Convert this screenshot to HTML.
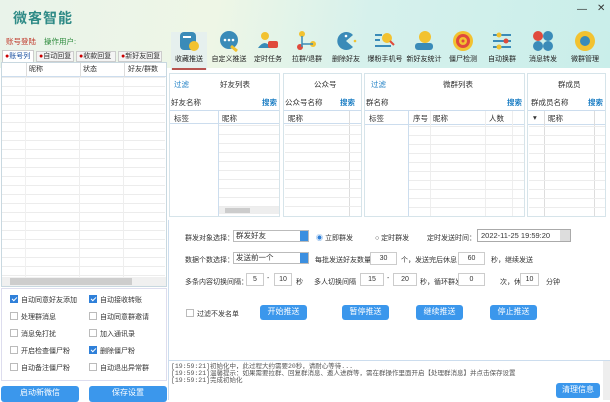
<!DOCTYPE html>
<html><head><meta charset="utf-8"><style>
*{margin:0;padding:0;box-sizing:border-box}
body{width:610px;height:400px;overflow:hidden;position:relative;background:#fff;font-family:"Liberation Sans","Noto Sans CJK SC",sans-serif;font-size:7.5px;color:#333}
.a{position:absolute}
.hdr{left:0;top:0;width:610px;height:68px;background:linear-gradient(100deg,#e9f3ea 0%,#eef6e6 35%,#d6f1ec 60%,#c9eeea 100%)}
.title{left:13px;top:8px;font-size:14px;color:#2e8a86;font-weight:bold;letter-spacing:1px}
.tb{top:30px;width:40px;text-align:center;font-size:7px;color:#222}
.tb svg{display:block;margin:0 auto 2px}
.grid{background-image:linear-gradient(#ececec 1px,transparent 1px);background-size:100% 9px}
.btn{background:#3b97ec;color:#fff;border-radius:3px;text-align:center;font-size:8px}
.cb{width:8px;height:8px;border:1px solid #bbb;background:#fff;display:inline-block;vertical-align:-1px;margin-right:3px}
.cb.on{background:#2f80d9;border-color:#2f80d9;position:relative}
.cb.on:after{content:"";position:absolute;left:2px;top:0;width:2px;height:4px;border:solid #fff;border-width:0 1px 1px 0;transform:rotate(45deg)}
.panel{border:1px solid #d6e4ea;top:73px;height:144px;background:#fff}
.in{border:1px solid #ccc;background:#fff;height:13px;font-size:7px;text-align:center;line-height:11px}
.lbl{font-size:7px;color:#333}
.blue{color:#1e7fc4}
</style></head><body>
<div class="a hdr"></div>
<div class="a title">微客智能</div>
<div class="a" style="left:577px;top:4px;font-size:10px;color:#333">—</div>
<div class="a" style="left:597px;top:3px;font-size:10px;color:#333">✕</div>
<div class="a" style="left:6px;top:36px;font-size:7.5px;color:#c0392b">账号登陆</div>
<div class="a" style="left:44px;top:36px;font-size:7.5px;color:#2a8a3a">操作用户:</div>

<div class="a" style="left:2px;top:50px;width:32px;height:12px;border:1px solid #ccc;border-bottom:none;background:#fff;font-size:7px;color:#1a4fa0;padding-left:2px;line-height:11px"><span style="color:#c00">●</span>账号列</div>
<div class="a" style="left:36px;top:51px;width:38px;height:11px;border:1px solid #ccc;background:#f4f4f4;font-size:7px;padding-left:2px;line-height:10px"><span style="color:#c00">●</span>自动回复</div>
<div class="a" style="left:76px;top:51px;width:40px;height:11px;border:1px solid #ccc;background:#f4f4f4;font-size:7px;padding-left:2px;line-height:10px"><span style="color:#c00">●</span>收款回复</div>
<div class="a" style="left:118px;top:51px;width:44px;height:11px;border:1px solid #ccc;background:#f4f4f4;font-size:7px;padding-left:2px;line-height:10px"><span style="color:#c00">●</span>新好友回复</div>
<div class="a" style="left:1px;top:62px;width:166px;height:225px;border:1px solid #c8d8e0;background:#fff"></div>
<div class="a" style="left:2px;top:63px;width:164px;height:14px;border-bottom:1px solid #cde;font-size:7px;line-height:14px">
<span class="a" style="left:24px;height:14px;border-left:1px solid #ddd"></span><span class="a" style="left:27px">昵称</span>
<span class="a" style="left:78px;height:14px;border-left:1px solid #ddd"></span><span class="a" style="left:81px">状态</span>
<span class="a" style="left:122px;height:14px;border-left:1px solid #ddd"></span><span class="a" style="left:126px">好友/群数</span></div>
<div class="a grid" style="left:2px;top:77px;width:163px;height:200px"></div>
<div class="a" style="left:25px;top:77px;height:200px;border-left:1px solid #f0f0f0"></div>
<div class="a" style="left:79px;top:77px;height:200px;border-left:1px solid #eee"></div>
<div class="a" style="left:123px;top:77px;height:200px;border-left:1px solid #eee"></div>
<div class="a" style="left:2px;top:277px;width:164px;height:9px;background:#f0f0f0"></div>
<div class="a" style="left:10px;top:278px;width:122px;height:7px;background:#cdcdcd"></div>

<div class="a" style="left:1px;top:288px;width:166px;height:93px;border:1px solid #dde;background:#fff"></div>
<div class="a lbl" style="left:10px;top:295px"><span class="cb on"></span>自动同意好友添加</div>
<div class="a lbl" style="left:89px;top:295px"><span class="cb on"></span>自动接收转账</div>
<div class="a lbl" style="left:10px;top:312px"><span class="cb"></span>处理群消息</div>
<div class="a lbl" style="left:89px;top:312px"><span class="cb"></span>自动同意群邀请</div>
<div class="a lbl" style="left:10px;top:329px"><span class="cb"></span>消息免打扰</div>
<div class="a lbl" style="left:89px;top:329px"><span class="cb"></span>加入通讯录</div>
<div class="a lbl" style="left:10px;top:346px"><span class="cb"></span>开启检查僵尸粉</div>
<div class="a lbl" style="left:89px;top:346px"><span class="cb on"></span>删除僵尸粉</div>
<div class="a lbl" style="left:10px;top:363px"><span class="cb"></span>自动备注僵尸粉</div>
<div class="a lbl" style="left:89px;top:363px"><span class="cb"></span>自动退出异常群</div>
<div class="a btn" style="left:1px;top:386px;width:78px;height:16px;line-height:14px">启动新微信</div>
<div class="a btn" style="left:89px;top:386px;width:78px;height:16px;line-height:14px">保存设置</div>

<div class="a" style="left:171px;top:32px;width:36px;height:38px;background:#e6f0ee"></div>
<div class="a" style="left:172px;top:68px;width:34px;height:2px;background:#b85450"></div>
<div class="a tb" style="left:169px"><svg width="22" height="22"><rect x="2" y="2" width="16" height="18" rx="4" fill="#3a8bb8"/><rect x="5" y="6" width="8" height="2" fill="#fff"/><circle cx="16" cy="16" r="5" fill="#f2c230"/></svg>收藏推送</div>
<div class="a tb" style="left:209px"><svg width="22" height="22"><circle cx="11" cy="10" r="9" fill="#3a8bb8"/><circle cx="7" cy="10" r="1.3" fill="#fff"/><circle cx="11" cy="10" r="1.3" fill="#fff"/><circle cx="15" cy="10" r="1.3" fill="#fff"/><path d="M13 16 L19 21" stroke="#f2c230" stroke-width="3"/></svg>自定义推送</div>
<div class="a tb" style="left:248px"><svg width="22" height="22"><circle cx="8" cy="6" r="4" fill="#f2c230"/><path d="M1 18 Q8 8 14 18Z" fill="#3a8bb8"/><rect x="11" y="11" width="10" height="7" rx="2" fill="#e04a3c"/></svg>定时任务</div>
<div class="a tb" style="left:287px"><svg width="22" height="22"><circle cx="6" cy="4" r="3" fill="#f2c230"/><circle cx="4" cy="17" r="3" fill="#e04a3c"/><circle cx="17" cy="14" r="3" fill="#f2c230"/><path d="M6 6 V17 M6 14 H17" stroke="#3a8bb8" stroke-width="1.5" fill="none"/></svg>拉群/退群</div>
<div class="a tb" style="left:326px"><svg width="22" height="22"><path d="M18 5 A9 9 0 1 0 18 17 L11 11Z" fill="#3a8bb8"/><circle cx="11" cy="6" r="1.3" fill="#fff"/><circle cx="20" cy="11" r="1.3" fill="#f2c230"/></svg>删除好友</div>
<div class="a tb" style="left:365px"><svg width="22" height="22"><rect x="1" y="4" width="7" height="2" fill="#3a8bb8"/><rect x="1" y="9" width="5" height="2" fill="#3a8bb8"/><rect x="1" y="15" width="16" height="2" fill="#3a8bb8"/><circle cx="13" cy="8" r="5" fill="#f2c230"/><path d="M16 11 L20 15" stroke="#e04a3c" stroke-width="2"/></svg>爆粉手机号</div>
<div class="a tb" style="left:404px"><svg width="22" height="22"><circle cx="12" cy="7" r="6" fill="#f2c230"/><rect x="2" y="13" width="18" height="7" rx="3" fill="#3a8bb8"/></svg>新好友统计</div>
<div class="a tb" style="left:443px"><svg width="22" height="22"><circle cx="11" cy="11" r="10" fill="#f2c230"/><circle cx="11" cy="11" r="7" fill="#e04a3c"/><circle cx="11" cy="11" r="4" fill="#f2c230"/><circle cx="11" cy="11" r="1.5" fill="#e04a3c"/></svg>僵尸检测</div>
<div class="a tb" style="left:482px"><svg width="22" height="22"><rect x="2" y="4" width="18" height="2" fill="#3a8bb8"/><rect x="2" y="10" width="18" height="2" fill="#3a8bb8"/><rect x="2" y="16" width="18" height="2" fill="#3a8bb8"/><circle cx="8" cy="5" r="2.5" fill="#f2c230"/><circle cx="15" cy="11" r="2.5" fill="#e04a3c"/><circle cx="8" cy="17" r="2.5" fill="#f2c230"/></svg>自动换群</div>
<div class="a tb" style="left:523px"><svg width="22" height="22"><circle cx="6" cy="6" r="5" fill="#e04a3c"/><circle cx="16" cy="6" r="5" fill="#3a8bb8"/><circle cx="6" cy="16" r="5" fill="#3a8bb8"/><circle cx="16" cy="16" r="5" fill="#3a8bb8"/></svg>消息转发</div>
<div class="a tb" style="left:565px"><svg width="22" height="22"><circle cx="11" cy="11" r="10" fill="#f2c230"/><circle cx="11" cy="11" r="5" fill="#3a8bb8"/></svg>微群管理</div>

<div class="a panel" style="left:169px;width:111px">
<div class="a blue" style="left:4px;top:5px">过滤</div><div class="a" style="left:50px;top:5px">好友列表</div>
<div class="a" style="left:1px;top:23px">好友名称</div><div class="a blue" style="left:92px;top:23px;font-weight:bold">搜索</div>
<div class="a" style="left:0;top:36px;width:109px;height:14px;border-top:1px solid #cde;border-bottom:1px solid #cde"></div>
<div class="a" style="left:4px;top:39px">标签</div><div class="a" style="left:52px;top:39px">昵称</div>
<div class="a" style="left:48px;top:37px;height:105px;border-left:1px solid #cde"></div>
<div class="a grid" style="left:49px;top:51px;width:60px;height:86px"></div>
<div class="a" style="left:49px;top:133px;width:60px;height:7px;background:#eee"></div>
<div class="a" style="left:55px;top:134px;width:25px;height:5px;background:#ccc"></div>
</div>
<div class="a panel" style="left:283px;width:79px">
<div class="a" style="left:30px;top:5px">公众号</div>
<div class="a" style="left:1px;top:23px">公众号名称</div><div class="a blue" style="left:56px;top:23px;font-weight:bold">搜索</div>
<div class="a" style="left:0;top:36px;width:77px;height:14px;border-top:1px solid #cde;border-bottom:1px solid #cde"></div>
<div class="a" style="left:4px;top:39px">昵称</div>
<div class="a" style="left:65px;top:37px;height:105px;border-left:1px solid #ddd"></div>
<div class="a grid" style="left:1px;top:51px;width:76px;height:90px"></div>
</div>
<div class="a panel" style="left:364px;width:161px">
<div class="a blue" style="left:6px;top:5px">过滤</div><div class="a" style="left:78px;top:5px">微群列表</div>
<div class="a" style="left:1px;top:23px">群名称</div><div class="a blue" style="left:142px;top:23px;font-weight:bold">搜索</div>
<div class="a" style="left:0;top:36px;width:159px;height:15px;border-top:1px solid #cde;border-bottom:1px solid #cde"></div>
<div class="a" style="left:4px;top:39px">标签</div><div class="a" style="left:48px;top:39px">序号</div><div class="a" style="left:68px;top:39px">昵称</div><div class="a" style="left:124px;top:39px">人数</div>
<div class="a" style="left:43px;top:37px;height:105px;border-left:1px solid #cde"></div>
<div class="a" style="left:65px;top:37px;height:105px;border-left:1px solid #eee"></div>
<div class="a" style="left:120px;top:37px;height:105px;border-left:1px solid #eee"></div>
<div class="a" style="left:147px;top:37px;height:105px;border-left:1px solid #eee"></div>
<div class="a grid" style="left:44px;top:52px;width:115px;height:90px"></div>
</div>
<div class="a panel" style="left:527px;width:79px">
<div class="a" style="left:30px;top:5px">群成员</div>
<div class="a" style="left:3px;top:23px">群成员名称</div><div class="a blue" style="left:60px;top:23px;font-weight:bold">搜索</div>
<div class="a" style="left:0;top:36px;width:77px;height:15px;border-top:1px solid #cde;border-bottom:1px solid #cde"></div>
<div class="a" style="left:5px;top:39px">▾</div><div class="a" style="left:20px;top:39px">昵称</div>
<div class="a" style="left:16px;top:37px;height:105px;border-left:1px solid #ddd"></div>
<div class="a" style="left:66px;top:37px;height:105px;border-left:1px solid #ddd"></div>
<div class="a grid" style="left:1px;top:52px;width:76px;height:90px"></div>
</div>

<div class="a" style="left:168px;top:220px;height:180px;border-left:1px solid #cde"></div>
<div class="a lbl" style="left:185px;top:233px">群发对象选择：</div>
<div class="a" style="left:233px;top:230px;width:76px;height:12px;border:1px solid #bbb;font-size:7.5px;padding-left:2px;line-height:10px">群发好友</div>
<div class="a" style="left:300px;top:231px;width:8px;height:10px;background:#3b8fe0"></div>
<div class="a lbl" style="left:316px;top:233px"><span style="color:#2f80d9">◉</span> 立即群发</div>
<div class="a lbl" style="left:375px;top:233px">○ 定时群发</div>
<div class="a lbl" style="left:427px;top:233px">定时发送时间：</div>
<div class="a" style="left:477px;top:229px;width:94px;height:13px;border:1px solid #aaa;font-size:7.5px;padding-left:3px;line-height:11px">2022-11-25 19:59:20</div>
<div class="a" style="left:560px;top:230px;width:10px;height:11px;background:#ddd"></div>
<div class="a lbl" style="left:185px;top:255px">数据个数选择：</div>
<div class="a" style="left:233px;top:252px;width:76px;height:12px;border:1px solid #bbb;font-size:7.5px;padding-left:2px;line-height:10px">发送前一个</div>
<div class="a" style="left:300px;top:253px;width:8px;height:10px;background:#3b8fe0"></div>
<div class="a lbl" style="left:315px;top:255px">每批发送好友数量</div>
<div class="a in" style="left:370px;top:252px;width:27px">30</div>
<div class="a lbl" style="left:401px;top:255px">个，发送完后休息</div>
<div class="a in" style="left:458px;top:252px;width:27px">60</div>
<div class="a lbl" style="left:491px;top:255px">秒，继续发送</div>
<div class="a lbl" style="left:185px;top:277px">多条内容切换间隔：</div>
<div class="a in" style="left:246px;top:273px;width:18px">5</div>
<div class="a lbl" style="left:267px;top:275px">-</div>
<div class="a in" style="left:274px;top:273px;width:18px">10</div>
<div class="a lbl" style="left:296px;top:277px">秒</div>
<div class="a lbl" style="left:314px;top:277px">多人切换间隔</div>
<div class="a in" style="left:360px;top:273px;width:24px">15</div>
<div class="a lbl" style="left:387px;top:275px">-</div>
<div class="a in" style="left:393px;top:273px;width:24px">20</div>
<div class="a lbl" style="left:420px;top:277px">秒，循环群发</div>
<div class="a in" style="left:458px;top:273px;width:27px">0</div>
<div class="a lbl" style="left:500px;top:277px">次，休息</div>
<div class="a in" style="left:520px;top:273px;width:19px">10</div>
<div class="a lbl" style="left:546px;top:277px">分钟</div>
<div class="a lbl" style="left:186px;top:309px"><span class="cb"></span>过滤不发名单</div>
<div class="a btn" style="left:260px;top:305px;width:47px;height:15px;line-height:14px">开始推送</div>
<div class="a btn" style="left:342px;top:305px;width:47px;height:15px;line-height:14px">暂停推送</div>
<div class="a btn" style="left:416px;top:305px;width:47px;height:15px;line-height:14px">继续推送</div>
<div class="a btn" style="left:490px;top:305px;width:47px;height:15px;line-height:14px">停止推送</div>

<div class="a" style="left:169px;top:360px;width:441px;height:40px;border-top:1px solid #cde;font-family:'Liberation Mono','Noto Sans CJK SC',monospace;font-size:6.5px;line-height:7px;color:#555;padding:2px 0 0 2px">
[19:59:21]初始化中，此过程大约需要20秒，请耐心等待...<br>[19:59:21]温馨提示：如果需要拉群、回复群消息、邀人进群等，需在群操作里面开启【处理群消息】并点击保存设置<br>[19:59:21]完成初始化</div>
<div class="a" style="left:603px;top:361px;width:7px;height:39px;background:#eee"></div>
<div class="a btn" style="left:556px;top:383px;width:44px;height:15px;line-height:14px">清理信息</div>
</body></html>
